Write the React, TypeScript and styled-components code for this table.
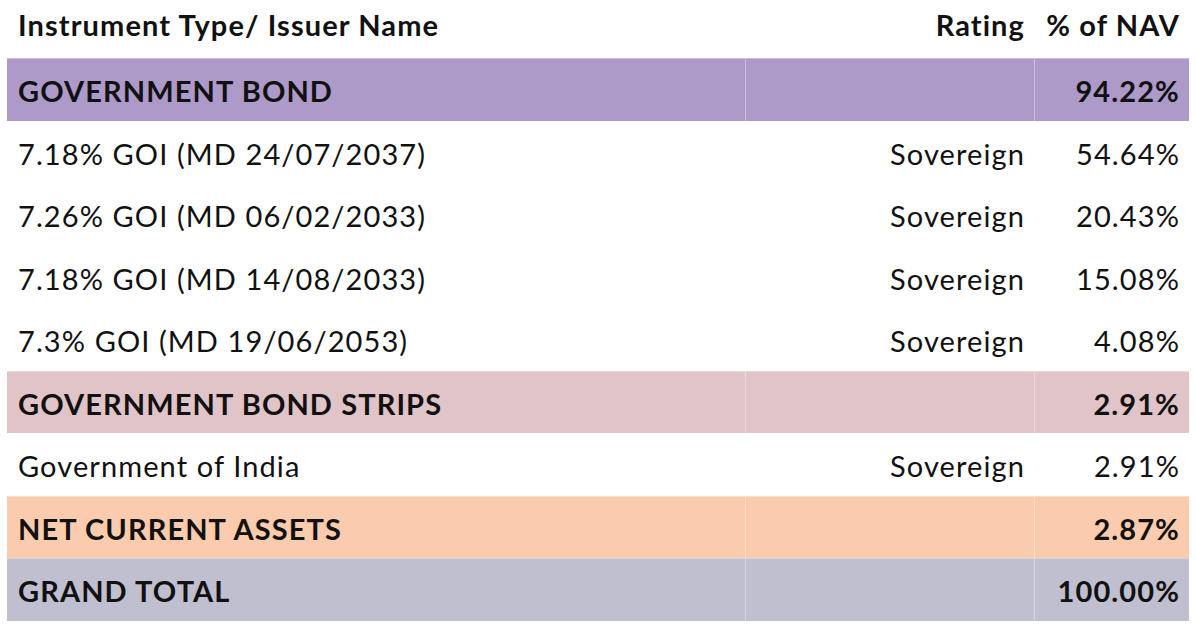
import React from "react";
import styled, { createGlobalStyle } from "styled-components";

const Global = createGlobalStyle`
  html, body { margin: 0; padding: 0; background: #ffffff; }
  body { font-family: "Lato", "Liberation Sans", sans-serif; color: #111111; }
`;

const Table = styled.div`
  width: 1182px;
  margin-left: 7px;
  display: flex;
  flex-direction: column;
`;

const Row = styled.div<{ $bg?: string; $h?: number }>`
  display: grid;
  grid-template-columns: 739px 289px 1fr;
  height: ${(p) => p.$h ?? 62.5}px;
  background: ${(p) => p.$bg ?? "transparent"};
  box-sizing: border-box;
  border-top: 1px solid ${(p) => (p.$bg ? "rgba(255,255,255,0.35)" : "transparent")};
`;

const Cell = styled.div<{ $align?: "left" | "right"; $bold?: boolean; $divider?: boolean; $header?: boolean }>`
  display: flex;
  align-items: ${(p) => (p.$header ? "flex-start" : "center")};
  justify-content: ${(p) => (p.$align === "right" ? "flex-end" : "flex-start")};
  padding: ${(p) => (p.$header ? "6px 9px 0 11px" : "2px 9px 0 11px")};
  font-size: 29px;
  letter-spacing: 1.1px;
  font-weight: ${(p) => (p.$bold ? 700 : 400)};
  white-space: nowrap;
  box-sizing: border-box;
  border-right: 1px solid ${(p) => (p.$divider ? "rgba(255,255,255,0.35)" : "transparent")};
  &:last-child { border-right: none; }
`;

type Line = { name: string; rating?: string; nav: string; kind: "group" | "item"; bg?: string };

const rows: Line[] = [
  { name: "GOVERNMENT BOND", nav: "94.22%", kind: "group", bg: "#ad9ac9" },
  { name: "7.18% GOI (MD 24/07/2037)", rating: "Sovereign", nav: "54.64%", kind: "item" },
  { name: "7.26% GOI (MD 06/02/2033)", rating: "Sovereign", nav: "20.43%", kind: "item" },
  { name: "7.18% GOI (MD 14/08/2033)", rating: "Sovereign", nav: "15.08%", kind: "item" },
  { name: "7.3% GOI (MD 19/06/2053)", rating: "Sovereign", nav: "4.08%", kind: "item" },
  { name: "GOVERNMENT BOND STRIPS", nav: "2.91%", kind: "group", bg: "#e0c4c8" },
  { name: "Government of India", rating: "Sovereign", nav: "2.91%", kind: "item" },
  { name: "NET CURRENT ASSETS", nav: "2.87%", kind: "group", bg: "#fbcbae" },
  { name: "GRAND TOTAL", nav: "100.00%", kind: "group", bg: "#bfbfcf" },
];

export default function App() {
  return (
    <>
      <Global />
      <Table>
        <Row $h={58}>
          <Cell $header $bold>Instrument Type/ Issuer Name</Cell>
          <Cell $header $bold $align="right">Rating</Cell>
          <Cell $header $bold $align="right">% of NAV</Cell>
        </Row>
        {rows.map((r, i) => {
          const g = r.kind === "group";
          return (
            <Row key={i} $bg={r.bg}>
              <Cell $bold={g} $divider={g}>{r.name}</Cell>
              <Cell $align="right" $divider={g}>{r.rating ?? ""}</Cell>
              <Cell $align="right" $bold={g}>{r.nav}</Cell>
            </Row>
          );
        })}
      </Table>
    </>
  );
}
